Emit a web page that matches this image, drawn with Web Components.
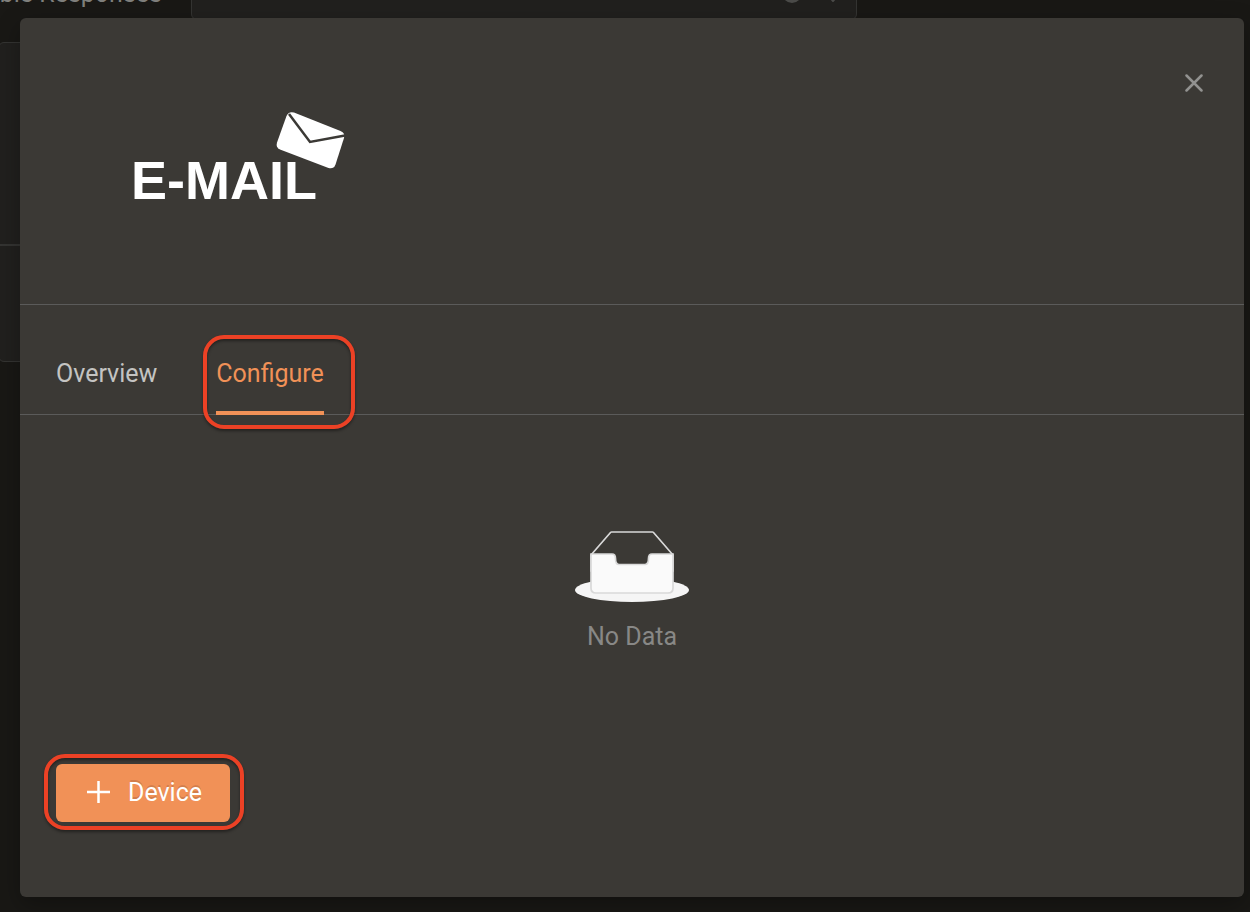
<!DOCTYPE html>
<html lang="en">
<head>
<meta charset="utf-8">
<meta name="viewport" content="width=device-width, initial-scale=1">
<title>E-Mail integration</title>
<style>
  html {
    background: #191815;
  }

  body {
    margin: 0;
    min-height: 100vh;
    overflow: hidden;
    background: #191815;
    color: #c4c4c2;
    font: 25px/32px Roboto, "Liberation Sans", sans-serif;
  }
</style>
</head>
<body>
<alert-page></alert-page>
<alert-modal>
  <email-logo slot="logo"></email-logo>
  <alert-tabs slot="tabs"></alert-tabs>
  <empty-state>No Data</empty-state>
  <add-button slot="footer">Device</add-button>
</alert-modal>

<script>
class AlertPage extends HTMLElement {
  constructor() {
    super();
    this.attachShadow({ mode: "open" });
    this.shadowRoot.innerHTML = `
      <style>
        :host {
          position: absolute;
          inset: 0;
          overflow: hidden;
          color: #80807d;
        }

        .row {
          display: grid;
          grid-template-columns: 162px minmax(0, 666px);
          column-gap: 29px;
          margin-top: -36px;
        }

        .label {
          display: flex;
          justify-content: flex-end;
          margin-top: 14px;
          white-space: nowrap;
        }

        .picker {
          display: flex;
          align-items: center;
          justify-content: flex-end;
          gap: 24px;
          box-sizing: border-box;
          height: 56px;
          padding: 0 16px;
          border: 1px solid #343432;
          border-radius: 6px;
          background: #21201e;
          color: #4b4b49;
        }

        .card {
          width: 320px;
          margin: 22px 0 0 -2px;
          border: 1px solid #343432;
          border-radius: 6px;
          background: #21201e;
        }

        .top {
          height: 201px;
          border-bottom: 2px solid #343432;
        }

        .bottom {
          height: 115px;
        }
      </style>
      <div class="row">
        <span class="label" id="label">Available Responses</span>
        <button class="picker" type="button" aria-labelledby="label">
          <svg width="20" height="24" viewBox="0 0 20 24"><circle cx="10" cy="13" r="10" fill="currentColor"/></svg>
          <svg width="14" height="20" viewBox="0 0 14 20"><path d="M1 12l6 7 6-7" fill="none" stroke="currentColor" stroke-width="2"/></svg>
        </button>
      </div>
      <div class="card">
        <div class="top"></div>
        <div class="bottom"></div>
      </div>
    `;
  }
}

class AlertModal extends HTMLElement {
  constructor() {
    super();
    this.attachShadow({ mode: "open" });
    this.shadowRoot.innerHTML = `
      <style>
        :host {
          display: block;
          position: relative;
          padding: 18px 6px 15px 20px;
        }

        section {
          border-radius: 6px;
          background: #3b3935;
          box-shadow: 0 8px 24px rgba(0, 0, 0, 0.3);
        }

        header {
          display: flex;
          align-items: flex-start;
          justify-content: space-between;
          box-sizing: border-box;
          min-height: 287px;
          padding: 44px 30px 32px 108px;
          border-bottom: 1px solid #5b5b5a;
        }

        .close {
          display: flex;
          padding: 10px;
          border: 0;
          background: none;
          color: #929290;
        }

        .body {
          padding: 116px 36px 111px;
        }

        footer {
          display: flex;
          padding: 0 36px 75px;
        }
      </style>
      <section role="dialog" aria-label="E-Mail">
        <header>
          <slot name="logo"></slot>
          <button class="close" type="button" aria-label="Close">
            <svg width="20" height="20" viewBox="0 0 20 20" fill="none" stroke="currentColor" stroke-width="2.5" stroke-linecap="round">
              <path d="M2.500 3.500l15 15M17.500 3.500l-15 15"/>
            </svg>
          </button>
        </header>
        <slot name="tabs"></slot>
        <div class="body"><slot></slot></div>
        <footer><slot name="footer"></slot></footer>
      </section>
    `;
  }
}

class EmailLogo extends HTMLElement {
  constructor() {
    super();
    this.attachShadow({ mode: "open" });
    this.shadowRoot.innerHTML = `
      <style>
        :host {
          display: block;
          padding-top: 42px;
        }

        svg {
          display: block;
        }

        text {
          font: bold 54px "Liberation Sans", sans-serif;
        }
      </style>
      <svg width="230" height="104" viewBox="128 104 230 104" fill="#fff">
        <text x="131" y="199">E-MAIL</text>
        <path d="M294 112.500L340.500 131Q345.500 133 344 138L335.500 164.500Q333.500 169.500 328.500 168L280 149.500Q275.500 147.500 277 142.500L286.500 116Q288.500 111 294 112.500Z"/>
        <path d="M289 114L310 142L345 135.500" fill="none" stroke="#3b3935" stroke-width="2.500"/>
      </svg>
    `;
  }
}

class AlertTabs extends HTMLElement {
  constructor() {
    super();
    this.attachShadow({ mode: "open" });
    this.shadowRoot.innerHTML = `
      <style>
        :host {
          display: block;
          border-bottom: 1px solid #5b5b5a;
        }

        nav {
          display: flex;
          gap: 59px;
          padding: 0 36px;
        }

        button {
          position: relative;
          margin: 0 0 -1px;
          padding: 53px 0 21px;
          border: 0;
          border-bottom: 4px solid transparent;
          background: none;
          color: #c4c4c2;
          font: inherit;
        }

        button[aria-selected="true"] {
          border-color: #f19157;
          color: #f19157;
        }

        mark-box {
          inset: 30px -31px -18px -13px;
        }
      </style>
      <nav role="tablist">
        <button type="button" role="tab" aria-selected="false">Overview</button>
        <button type="button" role="tab" aria-selected="true">Configure<mark-box></mark-box></button>
      </nav>
    `;
  }
}

class EmptyState extends HTMLElement {
  constructor() {
    super();
    this.attachShadow({ mode: "open" });
    this.shadowRoot.innerHTML = `
      <style>
        :host {
          display: flex;
          flex-direction: column;
          align-items: center;
          gap: 18px;
          color: #888886;
        }

        svg {
          display: block;
        }
      </style>
      <svg width="114" height="72" viewBox="0 0 114 72">
        <ellipse cx="57" cy="59" rx="57" ry="12" fill="#f5f5f5"/>
        <path d="M98 24L78.500 1.500Q78 1 77.500 1H36.500Q36 1 35.500 1.500L16 24V40H98Z" fill="#3b3935" stroke="#d9d9d9" stroke-width="1.700"/>
        <path d="M16 23H37C39.500 23 40.500 25 40.500 27.500C40.500 31 41.500 33.500 44 33.500H70C72.500 33.500 73.500 31 73.500 27.500C73.500 25 74.500 23 77 23H98V57Q98 62 93 62H21Q16 62 16 57Z" fill="#fafafa" stroke="#d9d9d9" stroke-width="1.700"/>
      </svg>
      <slot></slot>
    `;
  }
}

class AddButton extends HTMLElement {
  constructor() {
    super();
    this.attachShadow({ mode: "open" });
    this.shadowRoot.innerHTML = `
      <style>
        :host {
          display: block;
          position: relative;
        }

        button {
          display: flex;
          align-items: center;
          gap: 17px;
          height: 58px;
          padding: 0 28px 0 30px;
          border: 0;
          border-radius: 6px;
          background: #f19157;
          color: #fff;
          font: inherit;
          text-shadow: 0 -2px 0 rgba(0, 0, 0, 0.12);
        }

        mark-box {
          inset: -10px -14px -8px -12px;
        }
      </style>
      <button type="button">
        <svg width="25" height="24" viewBox="0 0 25 24" stroke="#fff" stroke-width="2.500">
          <path d="M12.500 0v22M1 11h23"/>
        </svg>
        <slot></slot>
      </button>
      <mark-box></mark-box>
    `;
  }
}

// red outline drawn around a highlighted control
class MarkBox extends HTMLElement {
  constructor() {
    super();
    this.attachShadow({ mode: "open" });
    this.shadowRoot.innerHTML = `
      <style>
        :host {
          position: absolute;
          box-sizing: border-box;
          border: 4px solid #ec4125;
          border-radius: 21px;
          box-shadow: 0 2px 3px rgba(0, 0, 0, 0.4), inset 0 2px 3px rgba(0, 0, 0, 0.4);
          pointer-events: none;
        }
      </style>
    `;
  }
}

customElements.define("mark-box", MarkBox);
customElements.define("alert-page", AlertPage);
customElements.define("alert-modal", AlertModal);
customElements.define("email-logo", EmailLogo);
customElements.define("alert-tabs", AlertTabs);
customElements.define("empty-state", EmptyState);
customElements.define("add-button", AddButton);
</script>
</body>
</html>
